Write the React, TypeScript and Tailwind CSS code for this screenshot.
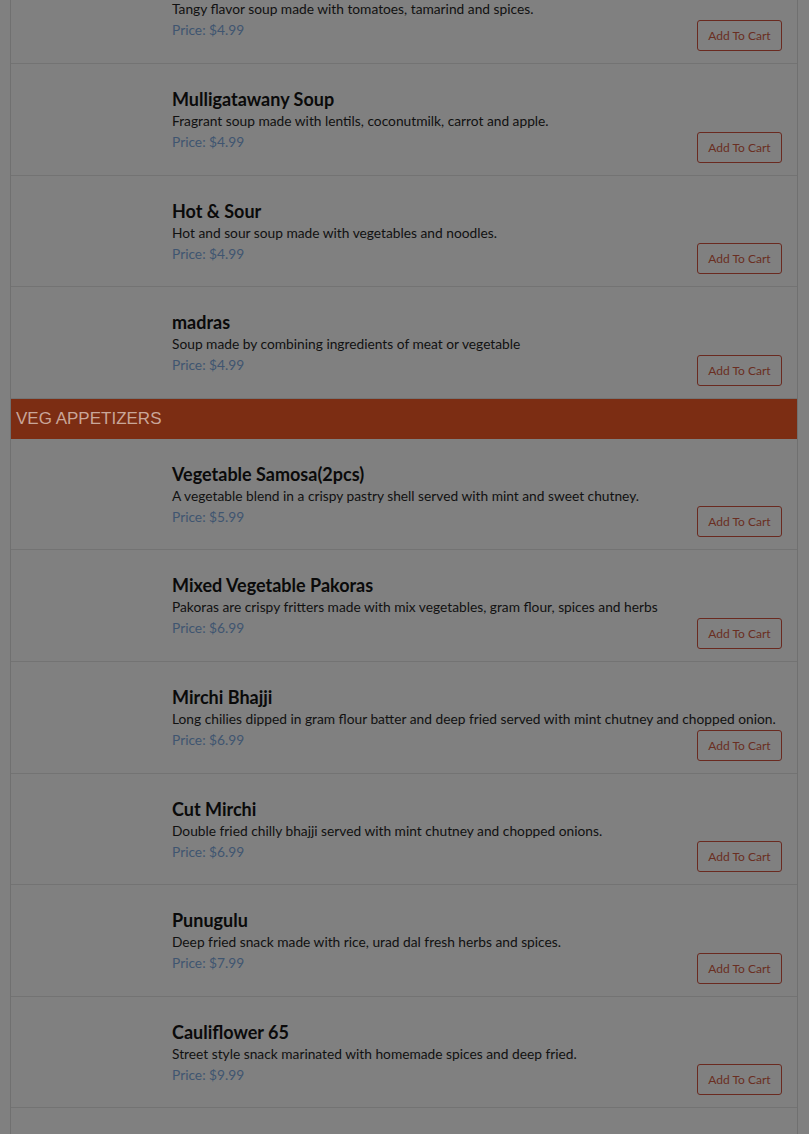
const soups = [
  { name: 'Tomato Soup', desc: 'Tangy flavor soup made with tomatoes, tamarind and spices.', price: '4.99', h: 'h-[112px]' },
  { name: 'Mulligatawany Soup', desc: 'Fragrant soup made with lentils, coconutmilk, carrot and apple.', price: '4.99', h: 'h-[112px]' },
  { name: 'Hot & Sour', desc: 'Hot and sour soup made with vegetables and noodles.', price: '4.99', h: 'h-[111px]' },
  { name: 'madras', desc: 'Soup made by combining ingredients of meat or vegetable', price: '4.99', h: 'h-[112px]' },
]

const appetizers = [
  { name: 'Vegetable Samosa(2pcs)', desc: 'A vegetable blend in a crispy pastry shell served with mint and sweet chutney.', price: '5.99', h: 'h-[111px]' },
  { name: 'Mixed Vegetable Pakoras', desc: 'Pakoras are crispy fritters made with mix vegetables, gram flour, spices and herbs', price: '6.99', h: 'h-[112px]' },
  { name: 'Mirchi Bhajji', desc: 'Long chilies dipped in gram flour batter and deep fried served with mint chutney and chopped onion.', price: '6.99', h: 'h-[112px]' },
  { name: 'Cut Mirchi', desc: 'Double fried chilly bhajji served with mint chutney and chopped onions.', price: '6.99', h: 'h-[111px]' },
  { name: 'Punugulu', desc: 'Deep fried snack made with rice, urad dal fresh herbs and spices.', price: '7.99', h: 'h-[112px]' },
  { name: 'Cauliflower 65', desc: 'Street style snack marinated with homemade spices and deep fried.', price: '9.99', h: 'h-[111px]' },
]

type Item = { name: string; desc: string; price: string; h: string }

function MenuRow({ item }: { item: Item }) {
  return (
    <div className={`relative flex border-b border-[#737373] ${item.h}`}>
      {/* image slot, empty in the list */}
      <div className="w-[161px] shrink-0" />
      <div className="flex-1 pt-[25px]">
        <h3 className="text-[18px] font-bold leading-[21px] text-[#0a0a0a]">{item.name}</h3>
        <p className="whitespace-nowrap text-[13.75px] leading-[21px] text-[#111111]">{item.desc}</p>
        <p className="text-[13.75px] leading-[21px] text-[#3f5570]">Price: ${item.price}</p>
      </div>
      <button className="absolute bottom-[12px] right-[15px] h-[31px] w-[85px] rounded-[3px] border border-[#6a2a20] text-[12px] text-[#6a2e22]">
        Add To Cart
      </button>
    </div>
  )
}

export default function App() {
  return (
    <div className="h-[1134px] overflow-hidden bg-[#808080] font-['Lato','Noto_Sans',sans-serif]">
      <div className="-mt-[48px] ml-[10px] mr-[11px] border-x border-[#707070]">
        {soups.map((item, index) => (
          <MenuRow key={index} item={item} />
        ))}
        <div className="flex h-[40px] items-center bg-[#7c2d13] px-[5px] font-['Liberation_Sans',sans-serif] text-[17px] text-[#c9a699]">
          VEG APPETIZERS
        </div>
        {appetizers.map((item, index) => (
          <MenuRow key={index} item={item} />
        ))}
        <div className="h-[112px]" />
      </div>
    </div>
  )
}
